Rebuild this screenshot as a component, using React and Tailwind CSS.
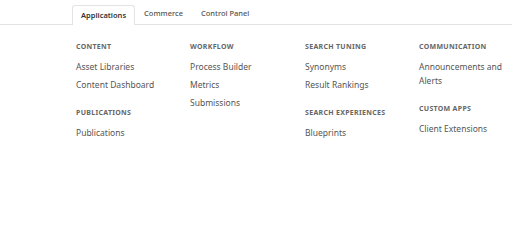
const sections = [
  [
    { title: "Content", items: ["Asset Libraries", "Content Dashboard"] },
    { title: "Publications", items: ["Publications"] },
  ],
  [{ title: "Workflow", items: ["Process Builder", "Metrics", "Submissions"] }],
  [
    { title: "Search Tuning", items: ["Synonyms", "Result Rankings"] },
    { title: "Search Experiences", items: ["Blueprints"] },
  ],
  [
    { title: "Communication", items: ["Announcements and Alerts"] },
    { title: "Custom Apps", items: ["Client Extensions"] },
  ],
];

const tabs = ["Applications", "Commerce", "Control Panel"];

export default function App() {
  return (
    <div
      className="w-[512px] h-[200px] bg-white overflow-hidden"
      style={{ fontFamily: '"Noto Sans", "Open Sans", sans-serif' }}
    >
      <div className="flex items-end h-[25px] pl-[72px] border-b border-[#e3e3e3]">
        {tabs.map((tab, i) =>
          i === 0 ? (
            <div
              key={tab}
              className="h-[20px] -mb-px px-[8px] flex items-center bg-white border border-b-0 border-[#e3e3e3] rounded-t-[3px] text-[7.5px] font-semibold text-[#333]"
            >
              {tab}
            </div>
          ) : (
            <div
              key={tab}
              className="h-[20px] px-[9px] flex items-center text-[7.5px] font-medium text-[#555]"
            >
              {tab}
            </div>
          )
        )}
      </div>

      <div className="grid grid-cols-[114px_115px_114px_92px] pl-[76px] pt-[16px]">
        {sections.map((col, ci) => (
          <div key={ci} className="flex flex-col gap-[15px]">
            {col.map((sec) => (
              <div key={sec.title}>
                <div className="h-[12px] leading-[12px] text-[7px] font-bold uppercase tracking-[0.3px] text-[#666]">
                  {sec.title}
                </div>
                <ul className="mt-[7px] flex flex-col gap-[4px]">
                  {sec.items.map((item) => (
                    <li key={item} className="text-[8.5px] leading-[14px] text-[#555] pr-[8px]">
                      {item}
                    </li>
                  ))}
                </ul>
              </div>
            ))}
          </div>
        ))}
      </div>
    </div>
  );
}
